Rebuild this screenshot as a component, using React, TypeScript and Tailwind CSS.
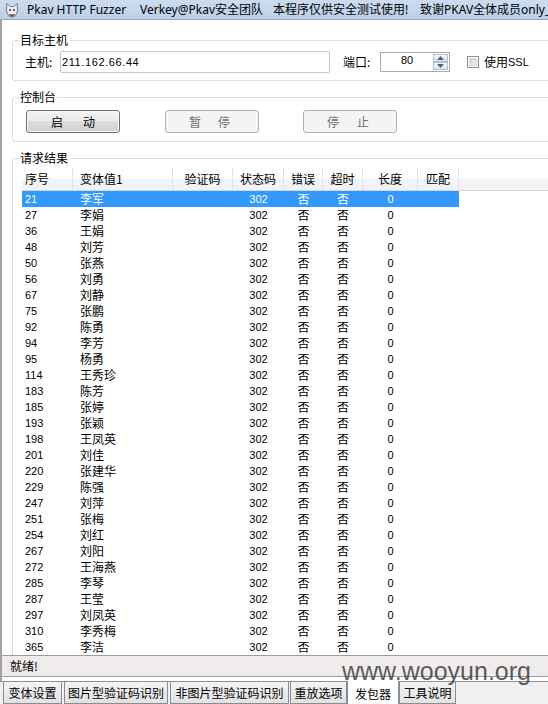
import React from "react";

const rows: [string, string][] = [
  ["21", "李军"], ["27", "李娟"], ["36", "王娟"], ["48", "刘芳"], ["50", "张燕"],
  ["56", "刘勇"], ["67", "刘静"], ["75", "张鹏"], ["92", "陈勇"], ["94", "李芳"],
  ["95", "杨勇"], ["114", "王秀珍"], ["183", "陈芳"], ["185", "张婷"], ["193", "张颖"],
  ["198", "王凤英"], ["201", "刘佳"], ["220", "张建华"], ["229", "陈强"], ["247", "刘萍"],
  ["251", "张梅"], ["254", "刘红"], ["267", "刘阳"], ["272", "王海燕"], ["285", "李琴"],
  ["287", "王莹"], ["297", "刘凤英"], ["310", "李秀梅"], ["365", "李洁"],
];

const headers = [
  { label: "序号", cls: "w-[51px] justify-start pl-[3px]" },
  { label: "变体值1", cls: "w-[100px] justify-start pl-[7px]" },
  { label: "验证码", cls: "w-[60px] justify-center" },
  { label: "状态码", cls: "w-[51px] justify-center" },
  { label: "错误", cls: "w-[39px] justify-center" },
  { label: "超时", cls: "w-[40px] justify-center" },
  { label: "长度", cls: "w-[55px] justify-center" },
  { label: "匹配", cls: "w-[41px] justify-center" },
];

const tabs = [
  { label: "变体设置", cls: "ml-[3px] w-[59px]", sel: false },
  { label: "图片型验证码识别", cls: "ml-[2px] w-[104px]", sel: false },
  { label: "非图片型验证码识别", cls: "ml-[2px] w-[119px]", sel: false },
  { label: "重放选项", cls: "ml-[1px] w-[57px]", sel: false },
  { label: "发包器", cls: "w-[52px]", sel: true },
  { label: "工具说明", cls: "w-[57px]", sel: false },
];

const CJK = "font-['Noto_Sans_CJK_SC',sans-serif]";
const NUM = "font-['Liberation_Sans',sans-serif]";

function TitleIcon() {
  return (
    <svg width="14" height="16" viewBox="0 0 14 16">
      <path d="M2 1.5 L5 4.5 L9 4.5 L12 1.5 L12.5 8 Q12 14.5 7 15 Q2 14.5 1.5 8 Z" fill="#ececec" stroke="#6a6a6a" strokeWidth="0.9" />
      <circle cx="5" cy="8" r="1" fill="#3a3a3a" />
      <circle cx="9" cy="8" r="1" fill="#3a3a3a" />
      <path d="M4 11.5 Q7 13.5 10 11.5 L9 14 Q7 15 5 14 Z" fill="#555" />
    </svg>
  );
}

export default function App() {
  return (
    <div className="relative w-[548px] h-[704px] overflow-hidden bg-white text-black">
      {/* Title bar */}
      <div className="flex items-center h-[20px] border-b border-[#9aa6b8] bg-[linear-gradient(#ccdcef,#bbd0e9)] text-[12px] whitespace-nowrap overflow-hidden font-['Noto_Sans','Noto_Sans_CJK_SC',sans-serif]">
        <div className="w-[27px] shrink-0 flex justify-center pr-[4px]">
          <TitleIcon />
        </div>
        <span className="w-[113px] shrink-0">Pkav HTTP Fuzzer</span>
        <span className="w-[133px] shrink-0">Verkey@Pkav安全团队</span>
        <span className="w-[147px] shrink-0">本程序仅供安全测试使用!</span>
        <span className="shrink-0">致谢PKAV全体成员only_</span>
      </div>

      {/* Body */}
      <div className="flex flex-col h-[635px] overflow-hidden border-l-2 border-[#a3a3a3]">
        {/* 目标主机 */}
        <fieldset className="mt-[13px] ml-[10px] -mr-[20px] border border-[#d5dfe5] rounded-[3px]">
          <legend className={`ml-[6px] px-[1px] text-[12px] leading-[14px] ${CJK}`}>目标主机</legend>
          <div className="flex items-center pl-[12px] pt-[4px] pb-[7px] h-[33px]">
            <span className={`w-[35px] shrink-0 text-[12px] ${CJK}`}>主机:</span>
            <div className={`w-[270px] h-[22px] shrink-0 border border-[#c3c8cf] rounded-[2px] flex items-center pl-[1px] text-[11px] tracking-[0.6px] ${NUM}`}>
              211.162.66.44
            </div>
            <span className={`ml-[13px] w-[37px] shrink-0 text-[12px] ${CJK}`}>端口:</span>
            <div className="w-[70px] h-[20px] shrink-0 border border-[#a4abb5] flex">
              <div className={`flex-1 flex items-center justify-center pb-[3px] text-[11px] ${NUM}`}>80</div>
              <div className="w-[16px] flex flex-col py-[1px] pr-[1px]">
                <div className="h-[9px] border border-[#b7bfca] bg-[linear-gradient(#f5f8fb,#dde4ed)] flex items-center justify-center">
                  <svg width="7" height="4" viewBox="0 0 7 4"><path d="M0 4 L3.5 0 L7 4 Z" fill="#4a6289" /></svg>
                </div>
                <div className="h-[9px] border border-[#b7bfca] bg-[linear-gradient(#f5f8fb,#dde4ed)] flex items-center justify-center">
                  <svg width="7" height="4" viewBox="0 0 7 4"><path d="M0 0 L7 0 L3.5 4 Z" fill="#4a6289" /></svg>
                </div>
              </div>
            </div>
            <div className="ml-[17px] w-[12px] h-[12px] shrink-0 border border-[#8e8f8f] p-[1px] bg-white">
              <div className="w-full h-full bg-[linear-gradient(135deg,#cfcfcf,#f6f6f6)] border border-[#d8d8d8]" />
            </div>
            <span className={`ml-[5px] text-[12px] ${CJK}`}>使用</span>
            <span className={`text-[11px] ${NUM}`}>SSL</span>
          </div>
        </fieldset>

        {/* 控制台 */}
        <fieldset className="mt-[9px] ml-[10px] -mr-[20px] border border-[#d5dfe5] rounded-[3px]">
          <legend className={`ml-[6px] px-[1px] text-[12px] leading-[14px] ${CJK}`}>控制台</legend>
          <div className={`flex pl-[13px] pt-[6px] pb-[8px] text-[12px] ${CJK}`}>
            <div className="w-[94px] h-[23px] shrink-0 flex items-center justify-center gap-[20px] border border-[#707070] rounded-[3px] bg-[linear-gradient(#f2f2f2_0%,#ebebeb_50%,#dddddd_50%,#cfcfcf_100%)] shadow-[inset_0_0_0_1px_#fbfbfb] text-black">
              <span>启</span><span>动</span>
            </div>
            <div className="ml-[45px] w-[94px] h-[23px] shrink-0 flex items-center justify-center gap-[17px] pr-[5px] border border-[#adb2b5] rounded-[3px] bg-[#f4f4f4] text-[#707070]">
              <span>暂</span><span>停</span>
            </div>
            <div className="ml-[44px] w-[94px] h-[23px] shrink-0 flex items-center justify-center gap-[18px] pr-[4px] border border-[#adb2b5] rounded-[3px] bg-[#f4f4f4] text-[#707070]">
              <span>停</span><span>止</span>
            </div>
          </div>
        </fieldset>

        {/* 请求结果 */}
        <fieldset className="mt-[9px] ml-[10px] -mr-[20px] border border-[#d5dfe5] rounded-[3px] pb-[40px]">
          <legend className={`ml-[6px] px-[1px] text-[12px] leading-[14px] ${CJK}`}>请求结果</legend>
          <div className="pl-[9px] pt-[2px]">
            {/* header */}
            <div className={`flex h-[24px] border-b border-[#d5d5d5] bg-[linear-gradient(#ffffff_0%,#ffffff_45%,#f3f4f6_55%,#f1f2f4_100%)] text-[12px] ${CJK}`}>
              {headers.map((h) => (
                <div key={h.label} className={`flex items-center pt-[1px] h-full shrink-0 border-r border-[#dfe3e8] ${h.cls}`}>
                  {h.label}
                </div>
              ))}
              <div className="flex-1" />
            </div>
            {/* rows */}
            {rows.map(([id, name], i) => {
              const sel = i === 0;
              return (
                <div key={id} className="flex h-[16px]">
                  <div className={`flex w-[437px] shrink-0 items-center leading-[16px] ${sel ? "bg-[#3399ff] text-white" : "text-black"}`}>
                    <div className={`w-[51px] shrink-0 pl-[3px] text-[11px] ${NUM}`}>{id}</div>
                    <div className={`w-[100px] shrink-0 pl-[7px] text-[12px] ${CJK}`}>{name}</div>
                    <div className="w-[60px] shrink-0" />
                    <div className={`w-[51px] shrink-0 text-center text-[11px] ${NUM}`}>302</div>
                    <div className={`w-[39px] shrink-0 text-center text-[12px] ${CJK}`}>否</div>
                    <div className={`w-[40px] shrink-0 text-center text-[12px] ${CJK}`}>否</div>
                    <div className={`w-[55px] shrink-0 text-center text-[11px] ${NUM}`}>0</div>
                    <div className="w-[41px] shrink-0" />
                  </div>
                </div>
              );
            })}
          </div>
        </fieldset>
      </div>

      {/* Status bar */}
      <div className={`h-[22px] flex items-center pl-[8px] border-y border-[#9c9c9c] border-l-2 border-l-[#a3a3a3] bg-[#f0eceb] text-[12px] ${CJK}`}>
        就绪!
      </div>
      <div className="h-[4px] bg-white border-l-2 border-[#a3a3a3]" />

      {/* Tabs */}
      <div className={`flex h-[23px] border-t border-[#8d9096] bg-[#f0f0f0] text-[12px] ${CJK}`}>
        {tabs.map((t) => (
          <div
            key={t.label}
            className={`${t.cls} shrink-0 flex items-center justify-center border-x border-b border-[#898c95] ${
              t.sel ? "-mt-[1px] h-[24px] pt-[2px] bg-white" : "h-[22px] bg-[linear-gradient(#f4f4f4,#e2e2e2)]"
            }`}
          >
            {t.label}
          </div>
        ))}
      </div>

      {/* Watermark */}
      <div className="absolute left-[342px] top-[659px] text-[25px] leading-none text-[#3f3f3f]/85 font-['Liberation_Sans',sans-serif] pointer-events-none whitespace-nowrap">
        www.wooyun.org
      </div>
    </div>
  );
}
